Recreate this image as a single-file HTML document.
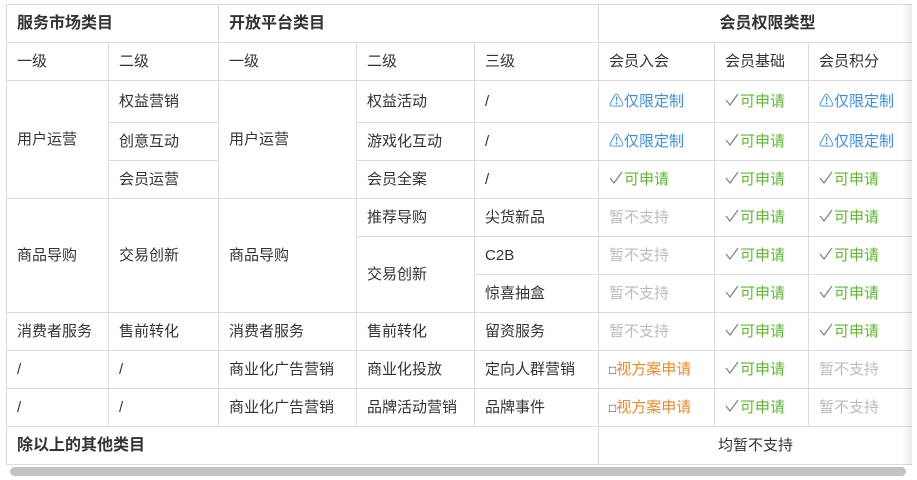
<!DOCTYPE html>
<html><head><meta charset="utf-8"><style>
html,body{margin:0;padding:0;background:#fff;width:917px;height:480px;overflow:hidden}
.wrap{position:absolute;left:6px;top:4px;width:906px;height:461px;overflow:hidden}
.shadow{position:absolute;left:902px;top:4px;width:10px;height:461px;background:linear-gradient(to right,rgba(0,0,0,0),rgba(0,0,0,0.08))}
table{border-collapse:collapse;table-layout:fixed;width:930px;font-family:"Liberation Sans","Noto Sans CJK SC",sans-serif;font-size:15px;color:#333}
td{border:1px solid #dcdcdc;padding:0 0 0 10px;white-space:nowrap;overflow:hidden;vertical-align:middle;line-height:20px}
tr{height:38px}
.h td{font-weight:bold;font-size:16px}
.b{color:#3a8ee6}.g{color:#5cb82f}.o{color:#ec8a2a}.x{color:#bbb}
.c{text-align:center;padding:0}
.ck{display:inline-block;width:14px;height:14px;vertical-align:-1px;margin-right:1px}
.sb{position:absolute;left:10px;top:467px;width:896px;height:9px;border-radius:5px;background:#c3c3c3}
</style></head><body>
<div class="wrap"><table>
<colgroup><col style="width:102px"><col style="width:110px"><col style="width:138px"><col style="width:118px"><col style="width:124px"><col style="width:116px"><col style="width:94px"><col style="width:128px"></colgroup>
<tr class="h"><td colspan="2">服务市场类目</td><td colspan="3">开放平台类目</td><td colspan="3" class="c">会员权限类型</td></tr>
<tr><td>一级</td><td>二级</td><td>一级</td><td>二级</td><td>三级</td><td>会员入会</td><td>会员基础</td><td>会员积分</td></tr>
<tr style="height:42px"><td rowspan="3">用户运营</td><td>权益营销</td><td rowspan="3">用户运营</td><td>权益活动</td><td>/</td><td class="b">⚠仅限定制</td><td class="g"><svg class="ck" viewBox="0 0 14 14"><path d="M1 7l4 5 8-11" fill="none" stroke="#888" stroke-width="1.3"/></svg>可申请</td><td class="b">⚠仅限定制</td></tr>
<tr><td>创意互动</td><td>游戏化互动</td><td>/</td><td class="b">⚠仅限定制</td><td class="g"><svg class="ck" viewBox="0 0 14 14"><path d="M1 7l4 5 8-11" fill="none" stroke="#888" stroke-width="1.3"/></svg>可申请</td><td class="b">⚠仅限定制</td></tr>
<tr><td>会员运营</td><td>会员全案</td><td>/</td><td class="g"><svg class="ck" viewBox="0 0 14 14"><path d="M1 7l4 5 8-11" fill="none" stroke="#888" stroke-width="1.3"/></svg>可申请</td><td class="g"><svg class="ck" viewBox="0 0 14 14"><path d="M1 7l4 5 8-11" fill="none" stroke="#888" stroke-width="1.3"/></svg>可申请</td><td class="g"><svg class="ck" viewBox="0 0 14 14"><path d="M1 7l4 5 8-11" fill="none" stroke="#888" stroke-width="1.3"/></svg>可申请</td></tr>
<tr><td rowspan="3">商品导购</td><td rowspan="3">交易创新</td><td rowspan="3">商品导购</td><td>推荐导购</td><td>尖货新品</td><td class="x">暂不支持</td><td class="g"><svg class="ck" viewBox="0 0 14 14"><path d="M1 7l4 5 8-11" fill="none" stroke="#888" stroke-width="1.3"/></svg>可申请</td><td class="g"><svg class="ck" viewBox="0 0 14 14"><path d="M1 7l4 5 8-11" fill="none" stroke="#888" stroke-width="1.3"/></svg>可申请</td></tr>
<tr><td rowspan="2">交易创新</td><td>C2B</td><td class="x">暂不支持</td><td class="g"><svg class="ck" viewBox="0 0 14 14"><path d="M1 7l4 5 8-11" fill="none" stroke="#888" stroke-width="1.3"/></svg>可申请</td><td class="g"><svg class="ck" viewBox="0 0 14 14"><path d="M1 7l4 5 8-11" fill="none" stroke="#888" stroke-width="1.3"/></svg>可申请</td></tr>
<tr><td>惊喜抽盒</td><td class="x">暂不支持</td><td class="g"><svg class="ck" viewBox="0 0 14 14"><path d="M1 7l4 5 8-11" fill="none" stroke="#888" stroke-width="1.3"/></svg>可申请</td><td class="g"><svg class="ck" viewBox="0 0 14 14"><path d="M1 7l4 5 8-11" fill="none" stroke="#888" stroke-width="1.3"/></svg>可申请</td></tr>
<tr><td>消费者服务</td><td>售前转化</td><td>消费者服务</td><td>售前转化</td><td>留资服务</td><td class="x">暂不支持</td><td class="g"><svg class="ck" viewBox="0 0 14 14"><path d="M1 7l4 5 8-11" fill="none" stroke="#888" stroke-width="1.3"/></svg>可申请</td><td class="g"><svg class="ck" viewBox="0 0 14 14"><path d="M1 7l4 5 8-11" fill="none" stroke="#888" stroke-width="1.3"/></svg>可申请</td></tr>
<tr><td>/</td><td>/</td><td>商业化广告营销</td><td>商业化投放</td><td>定向人群营销</td><td class="o"><span style="color:#333;font-size:12px">□</span>视方案申请</td><td class="g"><svg class="ck" viewBox="0 0 14 14"><path d="M1 7l4 5 8-11" fill="none" stroke="#888" stroke-width="1.3"/></svg>可申请</td><td class="x">暂不支持</td></tr>
<tr><td>/</td><td>/</td><td>商业化广告营销</td><td>品牌活动营销</td><td>品牌事件</td><td class="o"><span style="color:#333;font-size:12px">□</span>视方案申请</td><td class="g"><svg class="ck" viewBox="0 0 14 14"><path d="M1 7l4 5 8-11" fill="none" stroke="#888" stroke-width="1.3"/></svg>可申请</td><td class="x">暂不支持</td></tr>
<tr><td colspan="5" style="font-weight:bold;font-size:16px">除以上的其他类目</td><td colspan="3" class="c" style="padding-right:24px">均暂不支持</td></tr>
</table></div>
<div class="shadow"></div>
<div class="sb"></div>
</body></html>
